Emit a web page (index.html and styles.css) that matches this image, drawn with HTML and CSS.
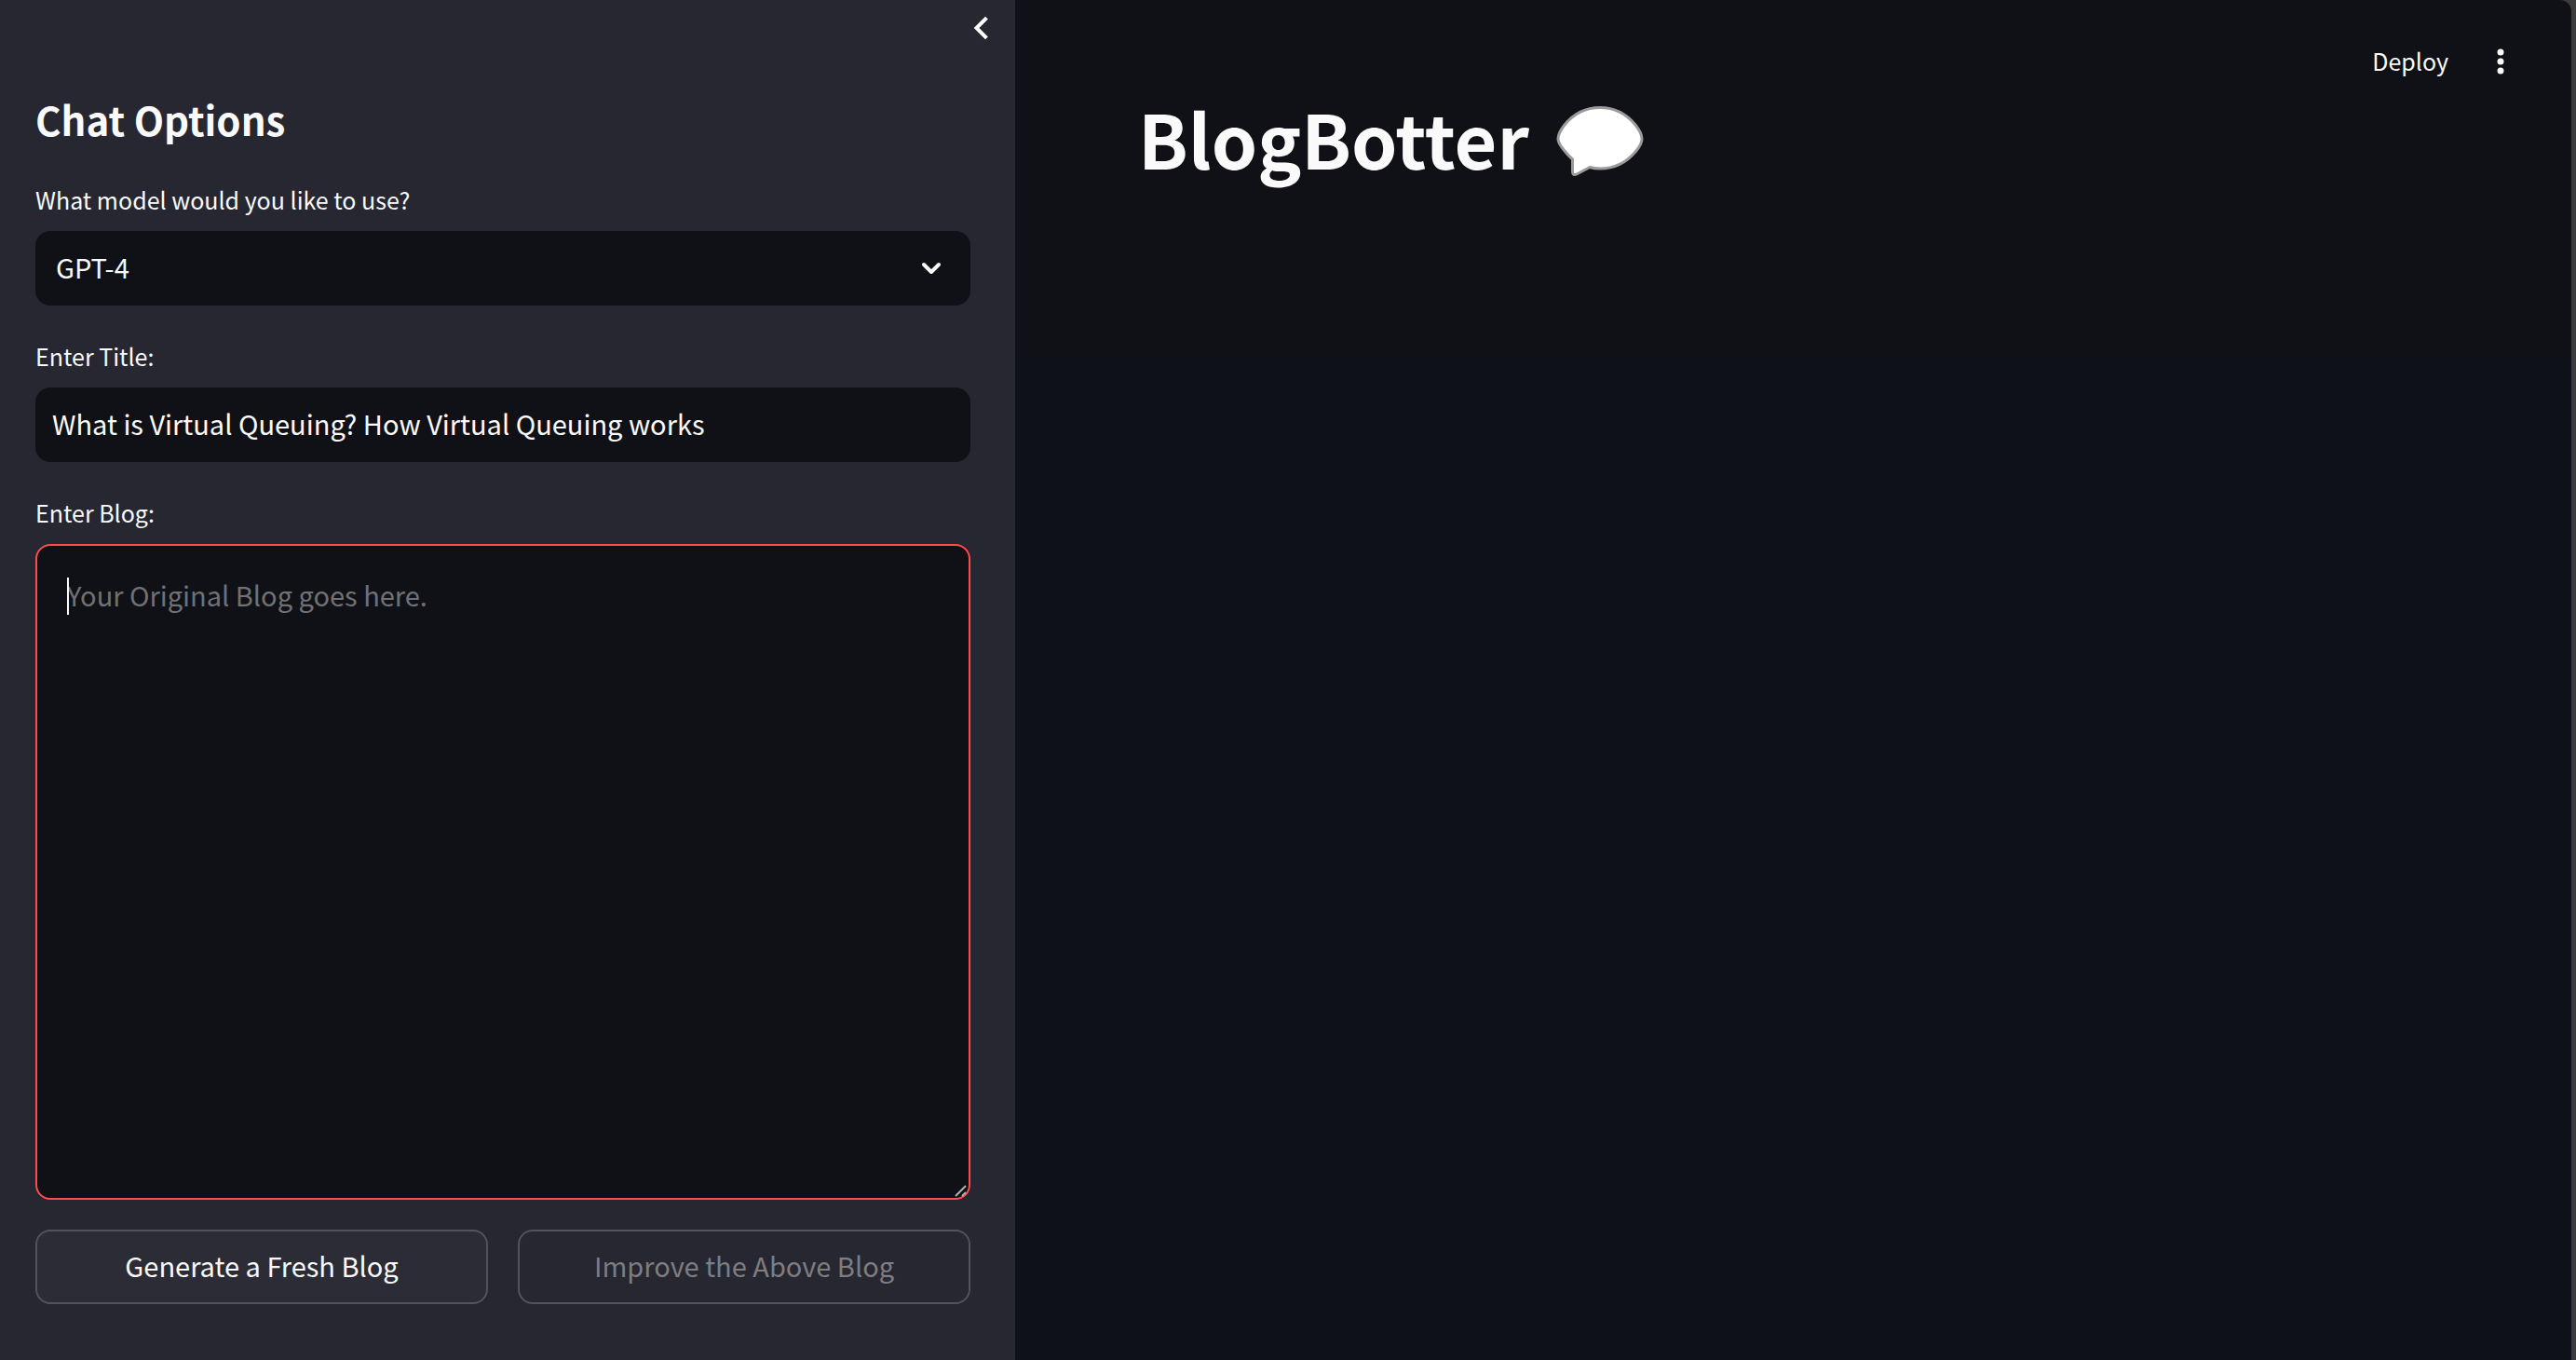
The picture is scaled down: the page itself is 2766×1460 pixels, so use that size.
FILE: index.html
```html
<!DOCTYPE html>
<html lang="en">
<head>
<meta charset="utf-8">
<title>BlogBotter</title>
<link rel="stylesheet" href="styles.css">
</head>
<body>
<div class="app">
  <aside class="sidebar">
    <div class="sidebar-top">
      <button class="icon-button" type="button" aria-label="Close sidebar">
        <svg width="40" height="40" viewBox="0 0 40 40" aria-hidden="true"><path d="M26 10.500 L16.500 20 L26 29.500" fill="none" stroke="#fff" stroke-width="4" stroke-linecap="square"/></svg>
      </button>
    </div>
    <form class="options">
      <h2 class="options-title">Chat Options</h2>
      <div class="field">
        <label class="label" for="model">What model would you like to use?</label>
        <div class="select-wrap">
          <select class="control select" id="model"><option>GPT-4</option></select>
          <svg class="select-arrow" width="32" height="32" viewBox="0 0 32 32" aria-hidden="true"><path d="M8 12 L16 20 L24 12" fill="none" stroke="#fafafa" stroke-width="4" stroke-linecap="round" stroke-linejoin="round"/></svg>
        </div>
      </div>
      <div class="field">
        <label class="label" for="title">Enter Title:</label>
        <input class="control" id="title" type="text" value="What is Virtual Queuing? How Virtual Queuing works">
      </div>
      <div class="field">
        <label class="label" for="blog">Enter Blog:</label>
        <div class="area-wrap">
          <textarea class="area" id="blog" placeholder="Your Original Blog goes here."></textarea>
          <span class="caret"></span>
          <svg class="grip" width="16" height="16" viewBox="0 0 16 16" aria-hidden="true"><path d="M2 14 L13 3 M9 14 L13 10" stroke="#b0b0b0" stroke-width="2"/></svg>
        </div>
      </div>
      <div class="actions">
        <button class="button" type="button">Generate a Fresh Blog</button>
        <button class="button" type="button" disabled>Improve the Above Blog</button>
      </div>
    </form>
  </aside>
  <main class="main">
    <header class="toolbar">
      <button class="deploy" type="button">Deploy</button>
      <button class="icon-button" type="button" aria-label="Menu">
        <svg width="40" height="40" viewBox="0 0 40 40" aria-hidden="true"><g fill="#fafafa"><circle cx="20" cy="10" r="3.5"/><circle cx="20" cy="20" r="3.5"/><circle cx="20" cy="30" r="3.5"/></g></svg>
      </button>
    </header>
    <h1 class="title">BlogBotter
      <svg class="bubble" width="96" height="76" viewBox="0 0 96 76" role="img" aria-label="Speech balloon"><path d="M48 1.500 C64 1.500 77 9 86 20 Q93 29 93 35 Q93 41 86 49 C75 62 62 67 48 67 Q42 67 37 65.500 L23 73 Q18.500 75 18.500 70 V57 Q15 54 10 48 Q3 40 3 35 Q3 29 10 20 C19 9 32 1.500 48 1.500 Z" fill="#fff" stroke="#9b9b9b" stroke-width="3"/></svg>
    </h1>
  </main>
</div>
</body>
</html>
```
FILE: styles.css
```css
* { box-sizing: border-box; }

body {
  margin: 0;
  background: #3c3c3c;
  color: #fafafa;
  font-family: "Noto Sans CJK SC", "Noto Sans", sans-serif;
  font-size: 29px;
}

button, input, select, textarea { font: inherit; color: inherit; }

button { padding: 0; border: 0; background: none; }

svg { display: block; }

.app {
  display: grid;
  grid-template-columns: 1090px 1fr;
  min-height: 100vh;
  margin-right: 5px;
  overflow: hidden;
  border-top-right-radius: 12px;
  background: linear-gradient(#101116 380px, #0e1117 380px);
}

.sidebar { background: #262730; }

.sidebar-top {
  display: flex;
  justify-content: flex-end;
  padding: 10px 18px 0;
}

.options {
  display: flex;
  flex-direction: column;
  gap: 32px;
  padding: 46px 48px 60px 38px;
}

.options-title {
  margin: 0;
  font-size: 42px;
  font-weight: 600;
  line-height: 64px;
}

.field { display: flex; flex-direction: column; }

.label {
  padding-bottom: 12px;
  font-size: 25px;
  line-height: 44px;
}

.control {
  width: 100%;
  height: 80px;
  padding: 0 18px 4px;
  border: 0;
  border-radius: 16px;
  outline: 0;
  background: #101116;
}

.select { padding: 0 22px 4px; appearance: none; }

.select-wrap, .area-wrap { position: relative; }

.select-arrow {
  position: absolute;
  top: 24px;
  right: 26px;
  pointer-events: none;
}

.area {
  display: block;
  width: 100%;
  height: 704px;
  padding: 30px 32px;
  border: 2px solid #ff4b4b;
  border-radius: 16px;
  outline: 0;
  background: #101116;
  line-height: 44px;
  resize: none;
}

.area::placeholder { color: #707175; opacity: 1; }

.caret {
  position: absolute;
  top: 36px;
  left: 34px;
  width: 2px;
  height: 40px;
  background: #fff;
}

.grip { position: absolute; right: 2px; bottom: 2px; }

.actions {
  display: grid;
  grid-template-columns: 1fr 1fr;
  gap: 32px;
}

.button {
  height: 80px;
  padding-bottom: 4px;
  border: 2px solid #52535b;
  border-radius: 16px;
  background: #2b2c36;
}

.button:disabled { background: transparent; color: #7d7d82; }

.toolbar {
  display: flex;
  align-items: center;
  justify-content: flex-end;
  gap: 36px;
  height: 86px;
  padding: 46px 56px 0 0;
}

.deploy { padding-bottom: 2px; font-size: 25px; line-height: 40px; }

.title {
  display: flex;
  align-items: center;
  gap: 28px;
  margin: 0;
  padding: 2px 0 0 132px;
  font-size: 79px;
  font-weight: 700;
  line-height: 120px;
}

.bubble { margin-top: 8px; }
```
